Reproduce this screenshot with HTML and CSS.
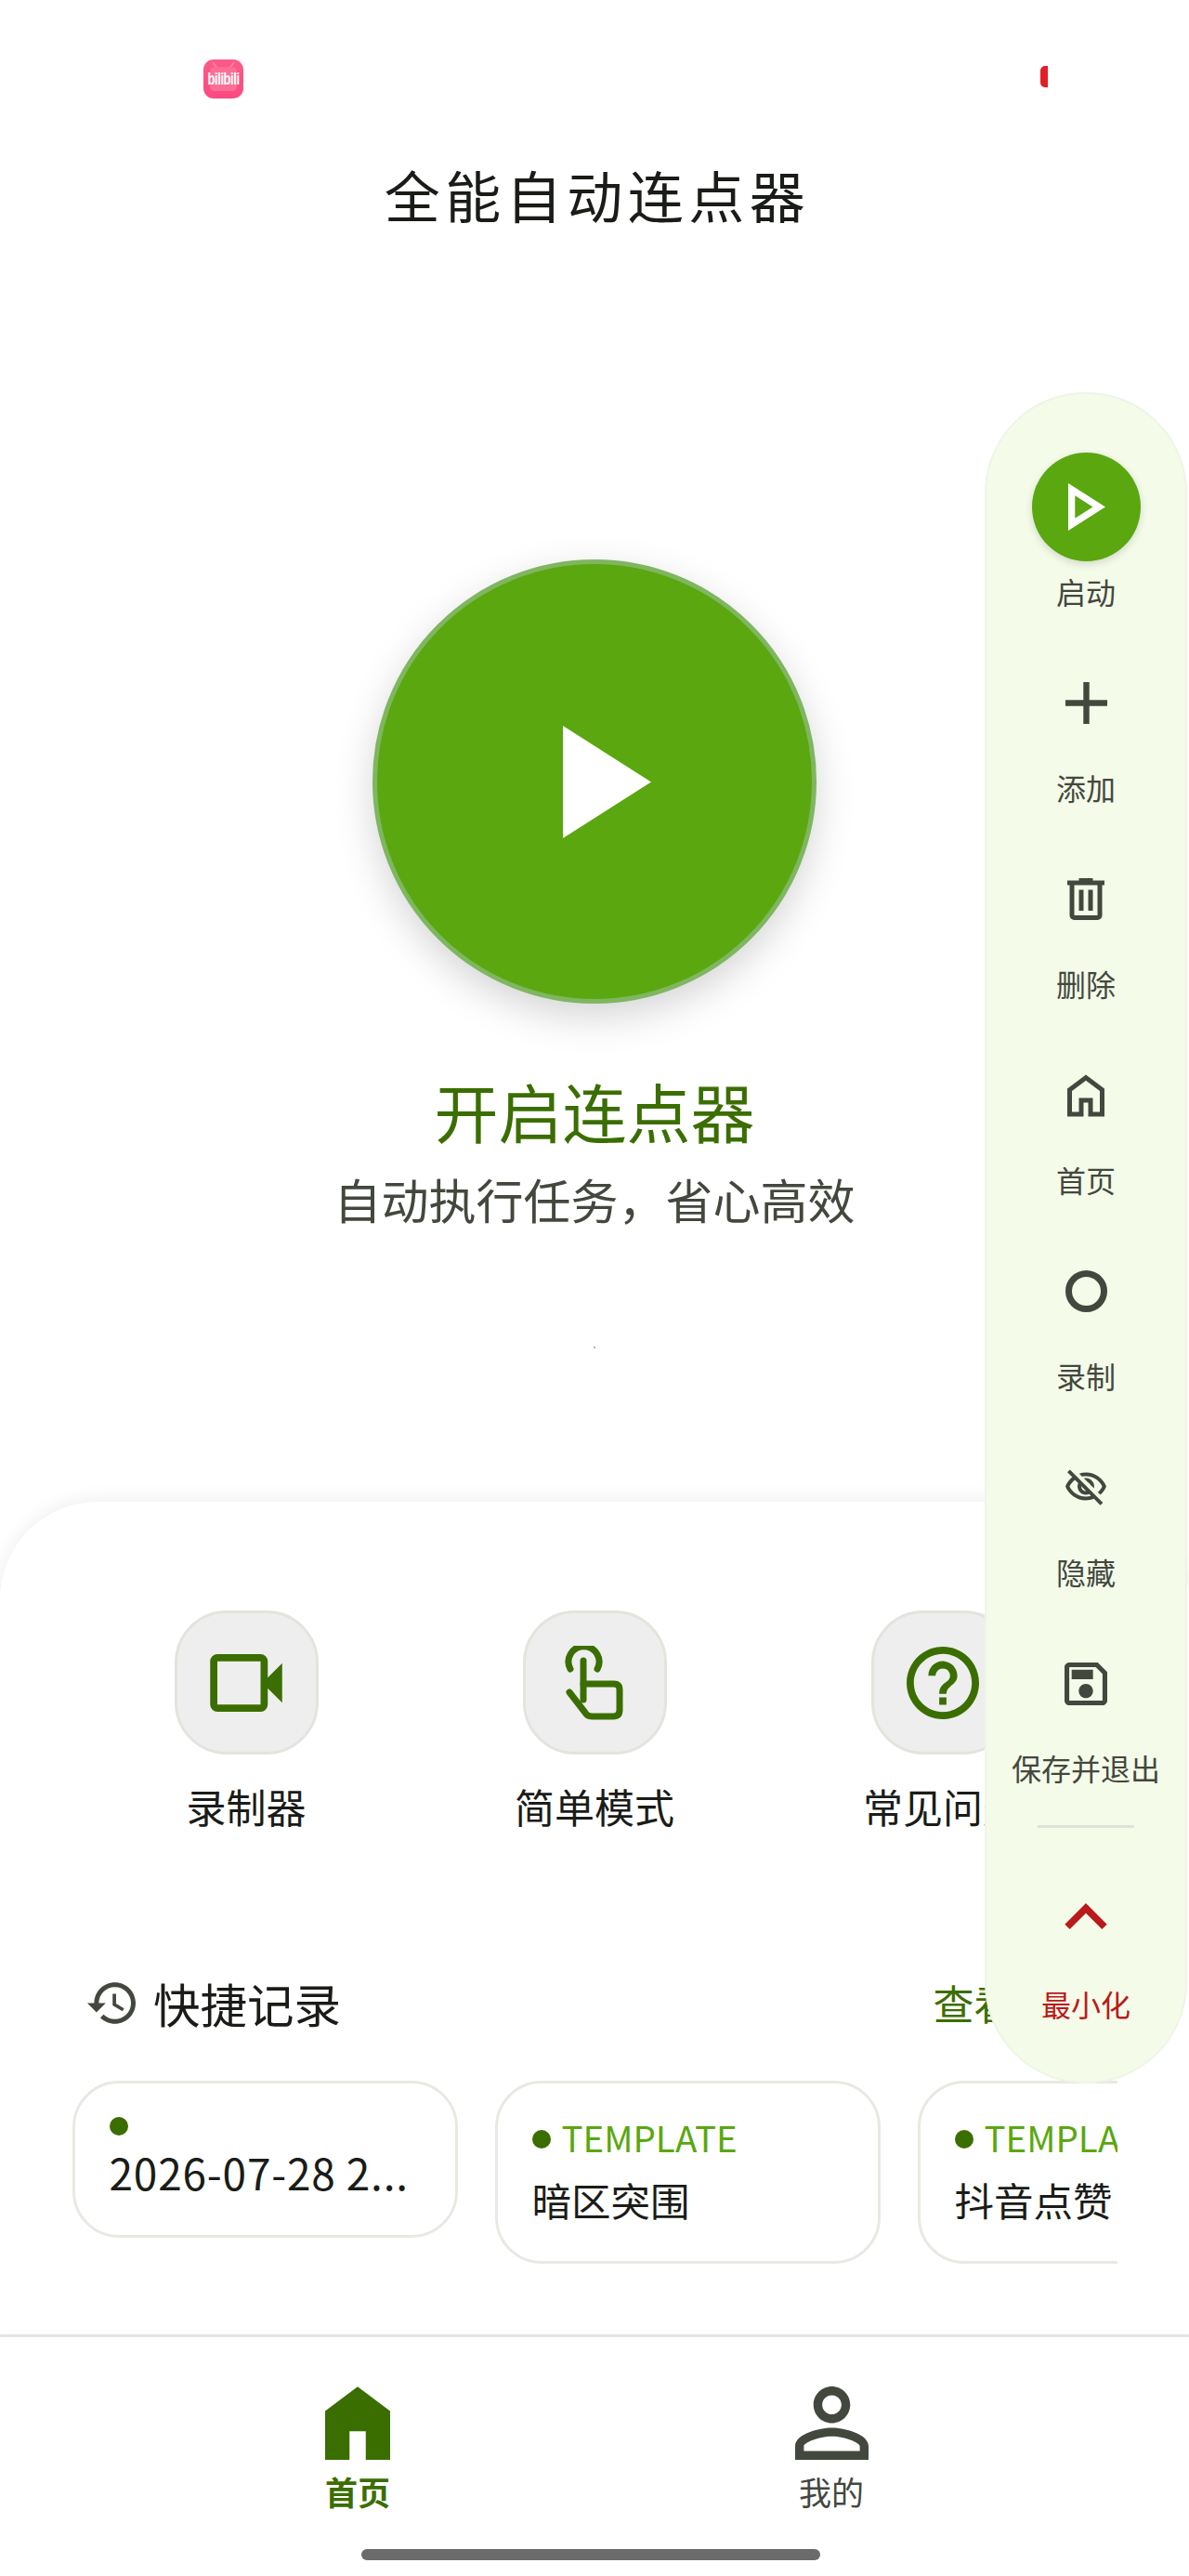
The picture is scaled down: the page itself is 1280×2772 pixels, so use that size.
FILE: index.html
```
<!DOCTYPE html>
<html lang="zh">
<head>
<meta charset="utf-8">
<title>全能自动连点器</title>
<link rel="stylesheet" href="styles.css">
</head>
<body>
<div class="screen">
  <div class="status">
    <div class="app-logo">
      <svg class="app-logo-tv" viewBox="0 0 43 42"><path d="M14 8 10 3M29 8l4-5" stroke="#fb86a8" stroke-width="2" fill="none"/><rect x="7" y="8" width="29" height="26" rx="5" fill="#fb6f96"/></svg>
      <span class="app-logo-text">bilibili</span>
    </div>
    <div class="status-mark"></div>
  </div>
  <h1 class="title">全能自动连点器</h1>

  <main class="hero">
    <button class="power">
      <svg class="power-icon" viewBox="0 0 95 121"><path d="M0 0 95 60.5 0 121Z"/></svg>
    </button>
    <div class="hero-title">开启连点器</div>
    <div class="hero-sub">自动执行任务，省心高效</div>
    <div class="hero-dot"></div>
  </main>

  <section class="sheet">
    <div class="actions">
      <div class="action">
        <div class="action-btn"><svg class="ic-video" viewBox="2 4 20 16"><path d="M4 20q-.825 0-1.412-.587Q2 18.825 2 18V6q0-.825.588-1.412Q3.175 4 4 4h12q.825 0 1.413.588Q18 5.175 18 6v4.5l4-4v11l-4-4V18q0 .825-.587 1.413Q16.825 20 16 20Zm0-2h12V6H4Z"/></svg></div>
        <div class="action-label">录制器</div>
      </div>
      <div class="action">
        <div class="action-btn"><svg class="ic-touch" viewBox="0 0 65 80"><path class="touch-line" d="M8 25A16.5 16.5 0 1 1 37 25"/><path class="touch-line" d="M22 16V58"/><path class="touch-line" d="M22 41H55Q61 41 61 47V69Q61 76 54 76H31Q26 76 24 72L7 50"/></svg></div>
        <div class="action-label">简单模式</div>
      </div>
      <div class="action">
        <div class="action-btn"><svg class="ic-help" viewBox="2 2 20 20"><path d="M11 18h2v-2h-2v2zm1-16C6.48 2 2 6.48 2 12s4.48 10 10 10 10-4.48 10-10S17.52 2 12 2zm0 18c-4.41 0-8-3.59-8-8s3.59-8 8-8 8 3.59 8 8-3.59 8-8 8zm0-14c-2.21 0-4 1.79-4 4h2c0-1.1.9-2 2-2s2 .9 2 2c0 2-3 1.75-3 5h2c0-2.25 3-2.5 3-5 0-2.21-1.79-4-4-4z"/></svg></div>
        <div class="action-label">常见问题</div>
      </div>
    </div>

    <div class="section-head">
      <svg class="ic-history" viewBox="1 3 21 18"><path d="M13 3c-4.97 0-9 4.03-9 9H1l3.89 3.89.07.14L9 12H6c0-3.87 3.13-7 7-7s7 3.13 7 7-3.13 7-7 7c-1.93 0-3.68-.79-4.94-2.06l-1.42 1.42C8.27 19.99 10.51 21 13 21c4.97 0 9-4.03 9-9s-4.03-9-9-9zm-1 5v5l4.28 2.54.72-1.21-3.5-2.08V8H12z"/></svg>
      <div class="section-title">快捷记录</div>
      <div class="section-link">查看全部</div>
    </div>

    <div class="cards">
      <div class="card">
        <div class="card-tag"><span class="dot"></span></div>
        <div class="card-title card-date">2026-07-28 2...</div>
      </div>
      <div class="card">
        <div class="card-tag"><span class="dot"></span><span class="tag-text">TEMPLATE</span></div>
        <div class="card-title">暗区突围</div>
      </div>
      <div class="card">
        <div class="card-tag"><span class="dot"></span><span class="tag-text">TEMPLATE</span></div>
        <div class="card-title">抖音点赞</div>
      </div>
    </div>
  </section>

  <nav class="nav">
    <div class="tabs">
      <div class="tab tab-active">
        <svg class="ic-nav-home" viewBox="4 3 16 18"><path d="M4 21V9l8-6 8 6v12h-6v-7h-4v7H4Z"/></svg>
        <div class="tab-label">首页</div>
      </div>
      <div class="tab">
        <svg class="ic-nav-user" viewBox="4 4 16 16"><path d="M12 5.9c1.16 0 2.1.94 2.1 2.1s-.94 2.1-2.1 2.1S9.9 9.16 9.9 8s.94-2.1 2.1-2.1m0 9c2.97 0 6.1 1.46 6.1 2.1v1.1H5.9V17c0-.64 3.13-2.1 6.1-2.1M12 4C9.79 4 8 5.79 8 8s1.79 4 4 4 4-1.79 4-4-1.79-4-4-4zm0 9c-2.67 0-8 1.34-8 4v3h16v-3c0-2.66-5.33-4-8-4z"/></svg>
        <div class="tab-label">我的</div>
      </div>
    </div>
    <div class="home-bar"></div>
  </nav>

  <aside class="panel">
    <div class="panel-item">
      <div class="panel-icon"><div class="panel-start"><svg class="ic-start" viewBox="8 5 11 14"><path d="M10 8.64 15.27 12 10 15.36V8.64M8 5v14l11-7L8 5z"/></svg></div></div>
      <div class="panel-label">启动</div>
    </div>
    <div class="panel-item">
      <div class="panel-icon"><svg class="ic-add" viewBox="5 5 14 14"><path d="M11 19v-6H5v-2h6V5h2v6h6v2h-6v6Z"/></svg></div>
      <div class="panel-label">添加</div>
    </div>
    <div class="panel-item">
      <div class="panel-icon"><svg class="ic-delete" viewBox="4 3 16 18"><path d="M7 21q-.825 0-1.412-.587Q5 19.825 5 19V6H4V4h5V3h6v1h5v2h-1v13q0 .825-.587 1.413Q17.825 21 17 21ZM17 6H7v13h10ZM9 17h2V8H9Zm4 0h2V8h-2Z"/></svg></div>
      <div class="panel-label">删除</div>
    </div>
    <div class="panel-item">
      <div class="panel-icon"><svg class="ic-home" viewBox="4 3 16 18"><path d="M6 19h3v-6h6v6h3v-9l-6-4.5L6 10Zm-2 2V9l8-6 8 6v12h-7v-6h-2v6Z"/></svg></div>
      <div class="panel-label">首页</div>
    </div>
    <div class="panel-item">
      <div class="panel-icon"><div class="ic-record"></div></div>
      <div class="panel-label">录制</div>
    </div>
    <div class="panel-item">
      <div class="panel-icon"><svg class="ic-hide" viewBox="1 2.4 22 19.2"><path d="M12 6c3.79 0 7.17 2.13 8.82 5.5-.59 1.22-1.42 2.27-2.41 3.12l1.41 1.41c1.39-1.23 2.49-2.77 3.18-4.53C21.27 7.11 17 4 12 4c-1.27 0-2.49.2-3.64.57l1.65 1.65C10.66 6.09 11.32 6 12 6zm-1.07 1.14L13 9.21c.57.25 1.03.71 1.28 1.28l2.07 2.07c.08-.34.14-.7.14-1.07C16.5 9.01 14.48 7 12 7c-.37 0-.72.05-1.07.14zM2.01 3.87l2.68 2.68C3.06 7.83 1.77 9.53 1 11.5 2.73 15.89 7 19 12 19c1.52 0 2.98-.29 4.32-.82l3.42 3.42 1.41-1.41L3.42 2.45 2.01 3.87zm7.5 7.5l2.61 2.61c-.04.01-.08.02-.12.02-1.38 0-2.5-1.12-2.5-2.5 0-.05.01-.08.01-.13zm-3.4-3.4l1.75 1.75c-.23.55-.36 1.15-.36 1.78 0 2.48 2.02 4.5 4.5 4.5.63 0 1.23-.13 1.77-.36l.98.98c-.88.24-1.8.38-2.75.38-3.79 0-7.17-2.13-8.82-5.5.7-1.43 1.72-2.61 2.93-3.53z"/></svg></div>
      <div class="panel-label">隐藏</div>
    </div>
    <div class="panel-item">
      <div class="panel-icon"><svg class="ic-save" viewBox="3 3 18 18"><path d="M17 3H5c-1.11 0-2 .9-2 2v14c0 1.1.89 2 2 2h14c1.1 0 2-.9 2-2V7l-4-4zm2 16H5V5h11.17L19 7.83V19zm-7-7c-1.66 0-3 1.34-3 3s1.34 3 3 3 3-1.34 3-3-1.34-3-3-3zM6 6h9v4H6z"/></svg></div>
      <div class="panel-label">保存并退出</div>
    </div>
    <div class="panel-divider"></div>
    <div class="panel-item panel-item-min">
      <div class="panel-icon"><svg class="ic-chevron" viewBox="6 8 12 7.41"><path d="M12 8l-6 6 1.41 1.41L12 10.83l4.59 4.58L18 14z"/></svg></div>
      <div class="panel-label">最小化</div>
    </div>
  </aside>
</div>
</body>
</html>
```
FILE: styles.css
```
* { box-sizing: border-box; }
html, body { margin: 0; padding: 0; background: #fff; }
body { font-family: "Noto Sans CJK SC", "Noto Sans", sans-serif; color: #1a1c18; }
svg { display: block; fill: currentColor; }

.screen { position: relative; width: 1280px; height: 2772px; overflow: hidden; display: flex; flex-direction: column; background: #fff; }

.status { display: flex; align-items: flex-start; padding: 64px 0 0 219px; height: 169px; }
.app-logo { position: relative; width: 43px; height: 42px; border-radius: 11px; background: linear-gradient(#fb5b88, #fb4a80); display: flex; align-items: center; justify-content: center; overflow: hidden; }
.app-logo-tv { position: absolute; left: 0; top: 0; width: 43px; height: 42px; }
.app-logo-text { position: relative; font-family: "Liberation Sans", sans-serif; font-size: 18px; line-height: 18px; font-weight: 700; letter-spacing: -0.6px; color: #fff; transform: scaleX(.72); }
.status-mark { width: 8px; height: 23px; margin: 7px 0 0 858px; background: #e21f26; border-radius: 5px 0 0 5px; }

.title { margin: 0; padding-left: 6px; text-align: center; font-size: 60px; line-height: 80px; font-weight: 400; letter-spacing: 5.5px; color: #1a1c18; }

.hero { height: 1367px; display: flex; flex-direction: column; align-items: center; padding-top: 353px; }
.power { flex: none; width: 478px; height: 478px; padding: 0; border: 5px solid #7fb660; border-radius: 50%; background: #5aa70f; box-shadow: 0 14px 42px rgba(0, 0, 0, .17); display: flex; align-items: center; justify-content: center; }
.power-icon { width: 95px; height: 121px; fill: #fff; margin-left: 26px; }
.hero-title { margin-top: 70px; font-size: 69px; line-height: 90px; color: #3b6e00; }
.hero-sub { margin-top: 15px; font-size: 51px; line-height: 70px; color: #43483e; }
.hero-dot { width: 2px; height: 2px; margin-top: 124px; background: #9a9a9a; border-radius: 50%; }

.sheet { height: 896px; padding: 117px 77.5px 0; background: #fff; border-radius: 105px 105px 0 0; box-shadow: 0 -2px 20px rgba(0, 0, 0, .07); position: relative; }
.actions { display: grid; grid-template-columns: repeat(3, 375px); }
.action { display: flex; flex-direction: column; align-items: center; }
.action-btn { width: 155px; height: 155px; border-radius: 56px; background: #eeeeee; border: 3px solid #e3e4dd; display: flex; align-items: center; justify-content: center; color: #3b6e00; }
.action-label { margin-top: 25px; font-size: 43px; line-height: 60px; color: #1a1c18; white-space: nowrap; }
.ic-video { width: 78px; height: 62px; }
.ic-touch { width: 65px; height: 80px; margin-left: -3px; }
.touch-line { fill: none; stroke: #3b6e00; stroke-width: 7; stroke-linecap: round; stroke-linejoin: round; }
.ic-help { width: 78px; height: 78px; }

.section-head { display: flex; align-items: center; height: 70px; margin-top: 147px; padding: 0 22px 0 16.5px; }
.ic-history { width: 52px; height: 45px; color: #43483e; flex: none; }
.section-title { margin-left: 19px; font-size: 50.5px; line-height: 70px; color: #1a1c18; }
.section-link { margin-left: auto; font-size: 44px; line-height: 70px; color: #3b6e00; }

.cards { display: flex; align-items: flex-start; gap: 40px; margin-top: 49px; overflow: hidden; }
.card { flex: none; width: 415px; padding: 35px 37px 38.5px; background: #fff; border: 3px solid #e8e9e2; border-radius: 50px; }
.card-tag { display: flex; align-items: center; gap: 12px; min-height: 22px; }
.dot { flex: none; width: 20px; height: 20px; border-radius: 50%; background: #3b6e00; }
.tag-text { margin: -3px 0 3px; font-size: 38.5px; line-height: 50px; color: #5aa70f; }
.card-title { margin-top: 11.5px; font-size: 42.5px; line-height: 56px; color: #1a1c18; white-space: nowrap; }
.card-date { margin: 9.5px 0 2px; font-size: 46px; letter-spacing: .8px; }

.nav { flex: 1; position: relative; background: #fff; border-top: 3px solid #e3e5e0; box-shadow: 0 -4px 10px rgba(0, 0, 0, .02); }
.tabs { display: grid; grid-template-columns: repeat(2, 510px); padding: 53px 0 0 130px; }
.tab { display: flex; flex-direction: column; align-items: center; color: #43483e; }
.tab-active { color: #3b6e00; }
.tab-active .tab-label { font-weight: 700; }
.ic-nav-home { width: 70px; height: 79px; }
.ic-nav-user { width: 79px; height: 79px; }
.tab-label { margin-top: 14px; font-size: 35px; line-height: 40px; }
.home-bar { width: 494px; height: 12px; margin: 42px 0 0 389px; border-radius: 6px; background: #6b6b6b; }

.panel { position: absolute; top: 422px; right: 2px; width: 218px; height: 1820px; padding: 63px 0 0; background: #f4fbe9; border: 2px solid #eef5e6; border-radius: 108px; display: flex; flex-direction: column; align-items: center; gap: 42px; }
.panel-item { flex: none; display: flex; flex-direction: column; align-items: center; color: #43483e; }
.panel-icon { width: 117px; height: 117px; display: flex; align-items: center; justify-content: center; }
.panel-label { margin-top: 12px; font-size: 32px; line-height: 40px; white-space: nowrap; }
.panel-start { width: 117px; height: 117px; border-radius: 50%; background: #5aa70f; box-shadow: 0 3px 8px rgba(0, 0, 0, .14); display: flex; align-items: center; justify-content: center; color: #fff; }
.ic-start { width: 40px; height: 51px; margin-left: 2px; }
.ic-add { width: 45px; height: 45px; }
.ic-delete { width: 40px; height: 47px; }
.ic-home { width: 40px; height: 46px; }
.ic-record { width: 45px; height: 45px; border: 7px solid #43483e; border-radius: 50%; }
.ic-hide { width: 44px; height: 39px; }
.ic-save { width: 46px; height: 46px; }
.panel-divider { flex: none; width: 104px; height: 3px; background: #dfe4d8; }
.panel-item-min { margin-top: -5.5px; color: #ba1a1a; }
.panel-item-min .panel-label { margin-top: 15.5px; }
.ic-chevron { width: 46px; height: 28px; }
```
